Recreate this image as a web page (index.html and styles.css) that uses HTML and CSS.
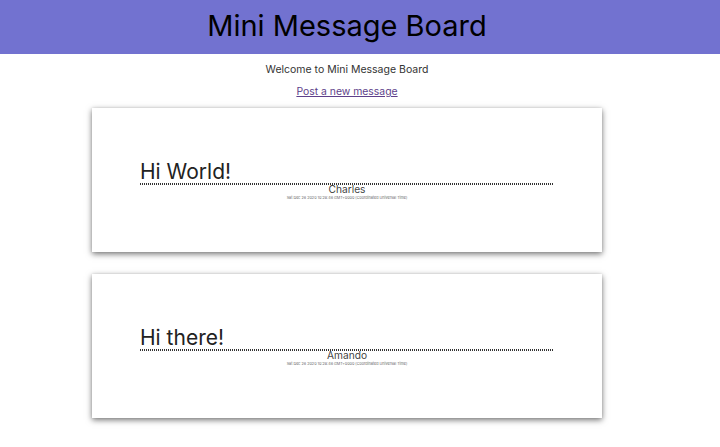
FILE: index.html
```html
<!DOCTYPE html>
<html lang="en">
<head>
  <meta charset="UTF-8">
  <meta name="viewport" content="width=device-width, initial-scale=1.0">
  <title>Mini Message Board</title>
  <link rel="stylesheet" href="styles.css">
</head>
<body>
  <header class="site-header">
    <h1>Mini Message Board</h1>
  </header>
  <main class="content">
    <p class="welcome">Welcome to Mini Message Board</p>
    <a class="new-link" href="#">Post a new message</a>
    <div class="message-card">
      <h2 class="message-text">Hi World!</h2>
      <p class="message-user">Charles</p>
      <p class="message-date">Sat Dec 26 2020 10:28:46 GMT+0000 (Coordinated Universal Time)</p>
    </div>
    <div class="message-card">
      <h2 class="message-text">Hi there!</h2>
      <p class="message-user">Amando</p>
      <p class="message-date">Sat Dec 26 2020 10:28:46 GMT+0000 (Coordinated Universal Time)</p>
    </div>
  </main>
</body>
</html>
```

FILE: styles.css
```css
body {
  margin: 0;
  font-family: 'Inter', sans-serif;
  background-color: #fff;
  color: #333;
}
.site-header {
  background-color: #7272d0;
  height: 54px;
  padding-right: 26px;
  padding-bottom: 3px;
  box-sizing: border-box;
  display: flex;
  justify-content: center;
  align-items: center;
}
.site-header h1 {
  margin: 0;
  color: #000;
  font-size: 29px;
  font-weight: 400;
}
.content {
  width: 694px;
  display: flex;
  flex-direction: column;
  align-items: center;
}
.welcome {
  margin: 8px 0 0;
  font-size: 10.5px;
  line-height: 15px;
}
.new-link {
  margin-top: 7px;
  font-size: 10.4px;
  line-height: 15px;
  color: #5e3f8a;
}
.message-card {
  width: 510px;
  height: 144px;
  margin-top: 9px;
  margin-bottom: 13px;
  padding: 51px 48px 0;
  box-sizing: border-box;
  background-color: #fff;
  box-shadow: 0 2px 6px rgba(0, 0, 0, 0.55), 0 0 2px rgba(0, 0, 0, 0.08);
  text-align: center;
}
/* dotted rule is drawn finer than a 2px border allows */
.message-text {
  margin: 0;
  height: 26px;
  background: repeating-linear-gradient(90deg, #333 0 1px, transparent 1px 2px) bottom / 100% 2px no-repeat;
  text-align: left;
  font-size: 21px;
  font-weight: 400;
  line-height: 26px;
  color: #222;
}
.message-user {
  margin: -1px 0 0;
  font-size: 10.2px;
  line-height: 11px;
  color: #444;
}
.message-date {
  margin: 0;
  font-size: 3.75px;
  line-height: 5px;
  color: #666;
}
```
